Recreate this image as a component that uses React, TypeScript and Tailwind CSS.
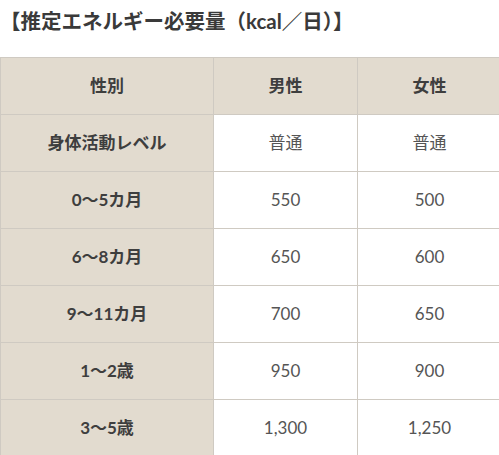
import React from "react";

const rows = [
  { label: "身体活動レベル", male: "普通", female: "普通" },
  { label: "0～5カ月", male: "550", female: "500" },
  { label: "6～8カ月", male: "650", female: "600" },
  { label: "9～11カ月", male: "700", female: "650" },
  { label: "1～2歳", male: "950", female: "900" },
  { label: "3～5歳", male: "1,300", female: "1,250" },
];

const font = { fontFamily: '"Lato", "Noto Sans CJK JP", sans-serif' };

export default function App() {
  return (
    <div className="w-[499px] h-[455px] overflow-hidden bg-white" style={font}>
      <h2 className="pt-[7px] mb-[22px] h-[35px] text-[20.5px] leading-[28px] font-bold text-[#3a3a3a]">
        【推定エネルギー必要量（kcal／日）】
      </h2>
      <table className="w-[501px] border-collapse table-fixed text-[17px]">
        <colgroup>
          <col className="w-[213px]" />
          <col className="w-[144px]" />
          <col className="w-[144px]" />
        </colgroup>
        <thead>
          <tr className="h-[57px] bg-[#e2dbcf]">
            <th className="border border-[#cfcac2] font-bold text-[#3e3e3e]">性別</th>
            <th className="border border-[#cfcac2] font-bold text-[#3e3e3e]">男性</th>
            <th className="border border-[#cfcac2] font-bold text-[#3e3e3e]">女性</th>
          </tr>
        </thead>
        <tbody>
          {rows.map((r) => (
            <tr key={r.label} className="h-[57px]">
              <th className="border border-[#cfcac2] bg-[#e2dbcf] font-bold text-[#3e3e3e]">{r.label}</th>
              <td className="border border-[#cfcac2] text-center text-[#555]">{r.male}</td>
              <td className="border border-[#cfcac2] text-center text-[#555]">{r.female}</td>
            </tr>
          ))}
        </tbody>
      </table>
    </div>
  );
}
